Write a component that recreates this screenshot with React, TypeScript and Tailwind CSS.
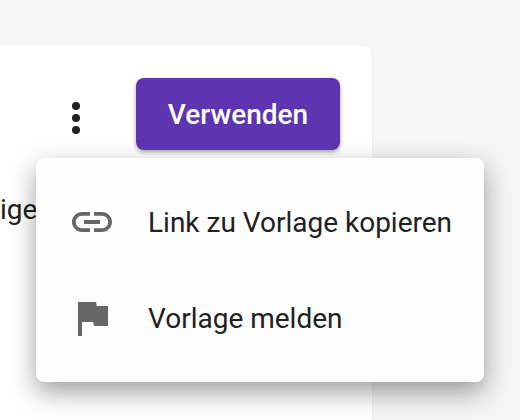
export default function App() {
  return (
    <div className="relative h-[420px] w-[520px] overflow-hidden bg-[#f5f5f5] pt-[46px] font-['Roboto',sans-serif]">
      {/* Card behind the menu */}
      <div className="ml-[-20px] h-[400px] w-[392px] rounded-lg bg-white shadow-[0_1px_2px_rgba(0,0,0,0.12)]">
        <div className="flex items-center justify-end gap-12 pr-8 pt-8">
          <svg width="24" height="48" viewBox="0 0 24 48" className="text-[#212121]">
            <circle cx="12" cy="16" r="4" fill="currentColor" />
            <circle cx="12" cy="28" r="4" fill="currentColor" />
            <circle cx="12" cy="40" r="4" fill="currentColor" />
          </svg>
          <button className="h-[72px] w-[204px] rounded-lg bg-[#5e35b1] pt-[2px] text-[28px] font-medium text-white shadow-[0_2px_4px_rgba(0,0,0,0.35)]">
            Verwenden
          </button>
        </div>
        <p className="ml-[20px] mt-[42px] text-[28px] leading-[36px] text-[#212121]">ige</p>
      </div>

      {/* Dropdown menu */}
      <div className="absolute left-9 top-[158px] w-[448px] rounded-lg bg-[#fdfdfd] pl-8 py-4 shadow-[0_10px_26px_rgba(0,0,0,0.38)]">
        <div className="flex h-24 items-center gap-8">
          <svg width="48" height="48" viewBox="0 0 24 24" fill="#666666">
            <path d="M3.9 12c0-1.71 1.39-3.1 3.1-3.1h4V7H7c-2.76 0-5 2.24-5 5s2.24 5 5 5h4v-1.9H7c-1.71 0-3.1-1.39-3.1-3.1zM8 13h8v-2H8v2zm9-6h-4v1.9h4c1.71 0 3.1 1.39 3.1 3.1s-1.39 3.1-3.1 3.1h-4V17h4c2.76 0 5-2.24 5-5s-2.24-5-5-5z" />
          </svg>
          <span className="whitespace-nowrap pt-[2px] text-[28px] text-[#212121]">Link zu Vorlage kopieren</span>
        </div>
        <div className="flex h-24 items-center gap-8">
          <svg width="48" height="48" viewBox="0 0 24 24" fill="#666666">
            <path d="M14.4 6L14 4H5v17h2v-7h5.6l.4 2h7V6z" />
          </svg>
          <span className="whitespace-nowrap pt-[2px] text-[28px] text-[#212121]">Vorlage melden</span>
        </div>
      </div>
    </div>
  );
}
